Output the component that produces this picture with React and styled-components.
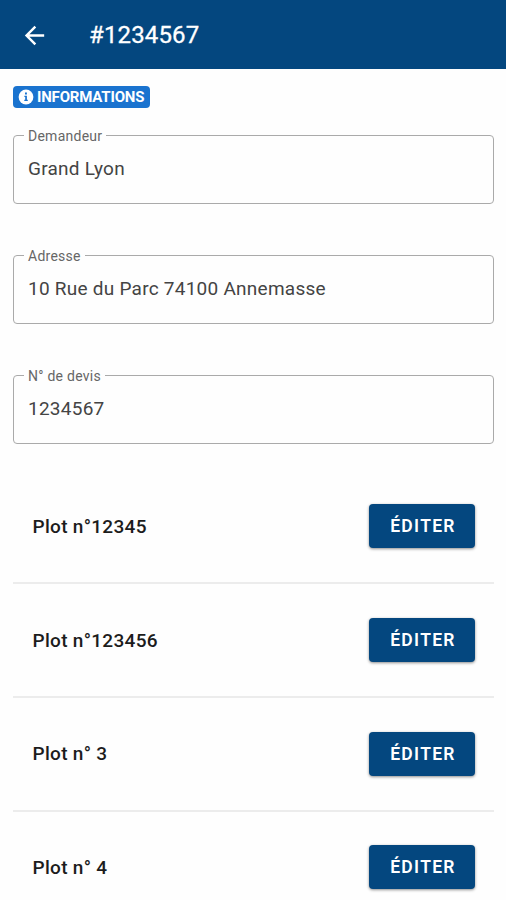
import styled, { createGlobalStyle } from 'styled-components';

const fields = [
    { label: 'Demandeur', value: 'Grand Lyon' },
    { label: 'Adresse', value: '10 Rue du Parc 74100 Annemasse' },
    { label: 'N° de devis', value: '1234567' },
];

const plots = ['Plot n°12345', 'Plot n°123456', 'Plot n° 3', 'Plot n° 4'];

function App() {
    return (
        <Container>
            <GlobalStyle />
            <Header>
                <BackButton aria-label="Retour">
                    <svg width="29" height="29" viewBox="0 0 24 24" fill="#fff">
                        <path d="M20 11H7.83l5.59-5.59L12 4l-8 8 8 8 1.41-1.41L7.83 13H20v-2z" />
                    </svg>
                </BackButton>
                <Title>#1234567</Title>
            </Header>
            <Content>
                <Badge>
                    <svg width="16" height="16" viewBox="0 0 16 16">
                        <circle cx="8" cy="8" r="7.4" fill="#fff" />
                        <path d="M6.4 6.7h2.5v4h.9v1.2H6.3v-1.2h.9V7.9h-.8zM7 3.6h1.9v1.9H7z" fill="#1a73cf" />
                    </svg>
                    INFORMATIONS
                </Badge>
                <Form>
                    {fields.map(field => (
                        <Field key={field.label}>
                            <Label>{field.label}</Label>
                            <Value>{field.value}</Value>
                        </Field>
                    ))}
                </Form>
                <List>
                    {plots.map(plot => (
                        <Row key={plot}>
                            <PlotName>{plot}</PlotName>
                            <EditButton>ÉDITER</EditButton>
                        </Row>
                    ))}
                </List>
            </Content>
        </Container>
    )
}

export default App;

const GlobalStyle = createGlobalStyle`
*{
    box-sizing:border-box;
}
body{
    margin:0;
    background:#fefefe;
    font-family:Roboto, sans-serif;
}
`;
const Container = styled.div`
height:900px;
overflow:hidden;
`;
const Header = styled.header`
display:flex;
align-items:center;
height:69px;
padding:1px 0 0 20px;
background-color:#04477f;
color:#fff;
`;
const BackButton = styled.button`
display:flex;
padding:0;
border:none;
background:none;
`;
const Title = styled.h1`
margin:0 0 0 40px;
font-size:24px;
font-weight:400;
line-height:32px;
letter-spacing:0.15px;
-webkit-text-stroke:0.3px #fff;
`;
const Content = styled.main`
padding:17px 12px 0 13px;
`;
const Badge = styled.div`
display:flex;
align-items:center;
gap:3px;
width:137px;
height:22px;
padding-left:5px;
border-radius:4px;
background-color:#1a73cf;
color:#fff;
font-size:15px;
font-weight:700;
letter-spacing:-0.18px;
white-space:nowrap;
`;
const Form = styled.div`
display:flex;
flex-direction:column;
gap:44px;
margin-top:20px;
`;
const Field = styled.fieldset`
height:76px;
margin:0;
padding:0 10px;
border:1px solid #aaa;
border-radius:4px;
`;
const Label = styled.legend`
height:15px;
padding:0 4px;
font-size:14px;
line-height:17px;
letter-spacing:0.25px;
color:#666;
`;
const Value = styled.div`
padding:14px 4px 0;
font-size:19px;
line-height:24px;
letter-spacing:0.25px;
color:#444;
`;
const List = styled.div`
margin-top:26.5px;
`;
const Row = styled.div`
display:flex;
align-items:center;
justify-content:space-between;
height:113.7px;
padding:0 19px 0 19.5px;
border-bottom:2px solid #ececec;
`;
const PlotName = styled.span`
font-size:19px;
font-weight:500;
letter-spacing:0.3px;
color:#1c1c1c;
`;
const EditButton = styled.button`
width:106px;
height:44px;
padding:0 0 0 2px;
border:none;
border-radius:4px;
background-color:#04477f;
box-shadow:0 1px 3px rgba(0,0,0,0.45);
color:#fff;
font-family:inherit;
font-size:17.5px;
font-weight:600;
letter-spacing:1.3px;
`;
